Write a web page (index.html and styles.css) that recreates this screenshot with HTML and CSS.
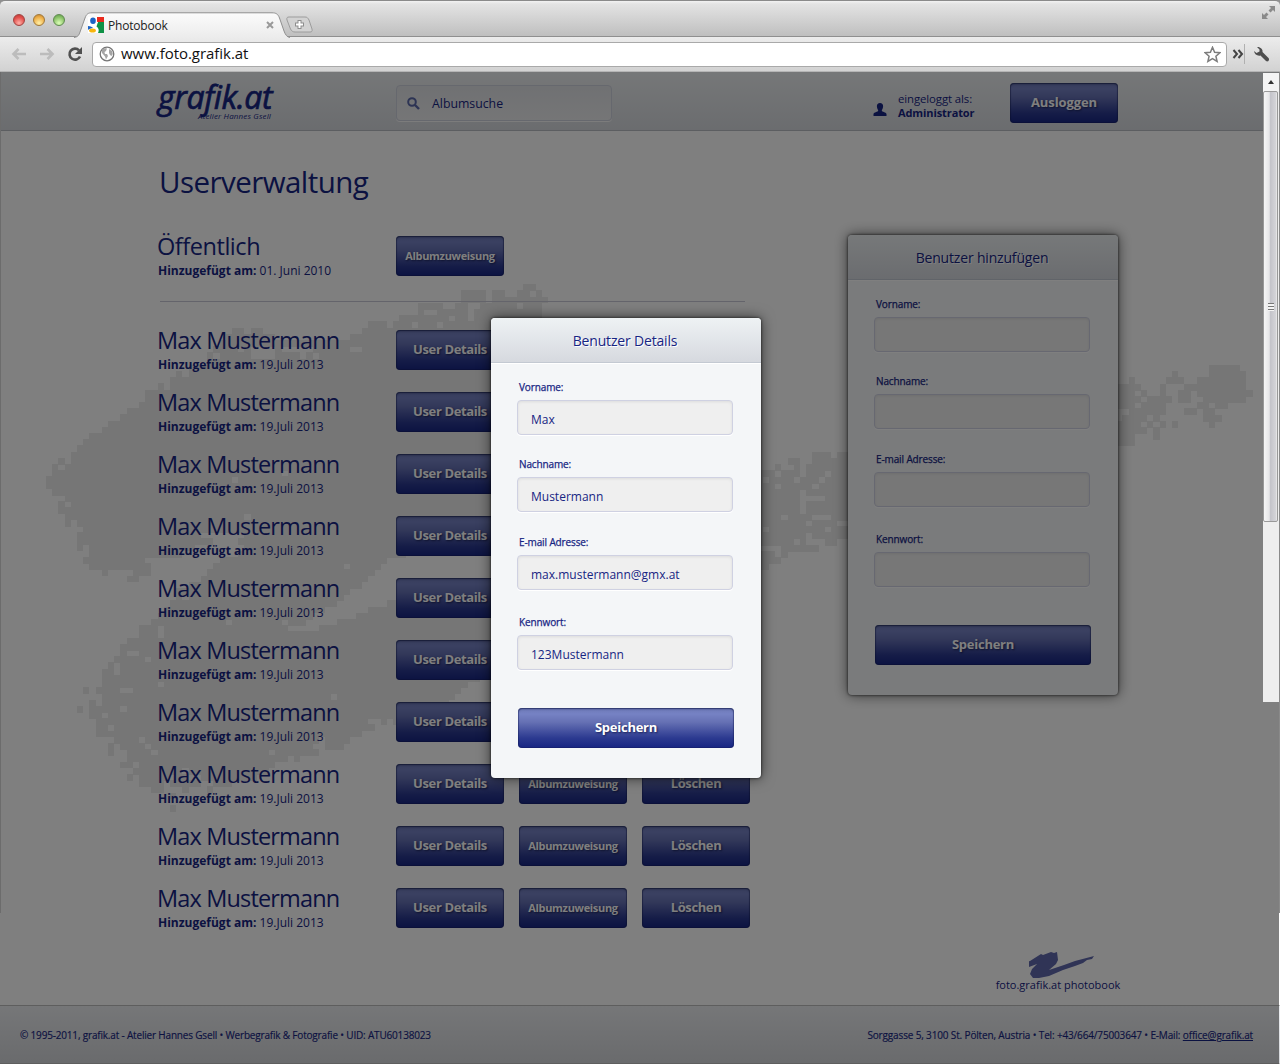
FILE: index.html
```html
<!DOCTYPE html>
<html lang="de">
<head>
<meta charset="utf-8">
<title>Photobook</title>
<link rel="stylesheet" href="styles.css">
</head>
<body>
<div class="browser">
  <div class="tabstrip">
    <div class="lights"><i class="light red"></i><i class="light yellow"></i><i class="light green"></i></div>
    <div class="tab">
      <svg class="tab-shape" width="216" height="26" viewBox="0 0 216 26"><defs><linearGradient id="tabfill" x1="0" y1="0" x2="0" y2="1"><stop offset="0" stop-color="#fbfbfb"/><stop offset="1" stop-color="#ececec"/></linearGradient></defs><path d="M0 25.5C4 25 5 23 6 20L11 6C12.500 2 14 .8 18 .8H198C202 .8 204 2 205.500 6L210 19C211.500 23 213 25 216 25.500" fill="url(#tabfill)" stroke="#8f8f8f"/></svg>
      <svg class="favicon" width="16" height="16" viewBox="0 0 16 16"><rect width="16" height="16" fill="#fff"/><path d="M9 0h7v5H9z" fill="#ea2a1d"/><path d="M10 5h6v11h-6c1.500-3 .5-5-1.500-6.500z" fill="#0f9246"/><ellipse cx="5" cy="3.700" rx="2.800" ry="3.200" fill="#1c63c4"/><path d="M0 9c3 0 4 1 5 2-2 0-4 1-5 2z" fill="#1c63c4"/><ellipse cx="4.500" cy="13.600" rx="3.400" ry="2" fill="#f7b50d"/><path d="M5 9.500c-1-1 1-1.500 2-2l3-2.500" stroke="#fff" fill="none"/></svg>
      <span class="tab-title">Photobook</span>
      <svg class="tab-close" width="8" height="8" viewBox="0 0 8 8"><path d="M1 1l6 6M7 1l-6 6" stroke="#999" stroke-width="2"/></svg>
    </div>
    <svg class="newtab" width="27" height="17" viewBox="0 0 27 17"><path d="M3 1H19C21 1 22 2 23 4L26 13C26.500 15 26 16 24 16H9C7 16 5.500 15 4.500 13L1 4C.5 2 1 1 3 1z" fill="#d2d2d2" stroke="#9c9c9c"/><path d="M13.500 4v9M9 8.500h9" stroke="#8d8d8d" stroke-width="4"/><path d="M13.500 5v7M10 8.500h7" stroke="#fff" stroke-width="2"/></svg>
    <svg class="fullscreen" width="15" height="15" viewBox="0 0 15 15" fill="#8a8a8a"><path d="M8 1h6v6l-2-2-2.500 2.500-2-2L10 3z"/><path d="M7 14H1V8l2 2 2.500-2.500 2 2L5 12z"/></svg>
  </div>
  <div class="toolbar">
    <svg class="nav" width="16" height="14" viewBox="0 0 16 14"><path d="M15 7H3M7.500 2L2.500 7l5 5" fill="none" stroke="#bcbcbc" stroke-width="2.600"/></svg>
    <svg class="nav fwd" width="16" height="14" viewBox="0 0 16 14"><path d="M1 7h12M8.500 2l5 5-5 5" fill="none" stroke="#bcbcbc" stroke-width="2.600"/></svg>
    <svg class="reload" width="16" height="16" viewBox="0 0 16 16"><path d="M13 10.500A5.500 5.500 0 1 1 12 4.300" fill="none" stroke="#505050" stroke-width="2.600"/><path d="M15 1v7H8z" fill="#505050"/></svg>
    <div class="address">
      <svg width="16" height="16" viewBox="0 0 16 16"><circle cx="8" cy="8" r="6.800" fill="#fff" stroke="#777" stroke-width="1.300"/><path d="M3 3.500C5 2 7 2 8 2.500L7 5 5.500 6 6 8H8l1 2-2 3.500-1-3L3 7zM10 3l3 2 .8 3-1.300 2-1.500-1-1-2z" fill="#a5a5a5"/></svg>
      <span class="url">www.foto.grafik.at</span>
      <svg class="star" width="17" height="17" viewBox="0 0 17 17"><path d="M8.500 1.300l2.100 4.900 5.300.5-4 3.500 1.200 5.200-4.600-2.800-4.600 2.800 1.200-5.200-4-3.500 5.300-.5z" fill="#fff" stroke="#7d7d7d" stroke-width="1.500"/></svg>
    </div>
    <svg class="more" width="12" height="10" viewBox="0 0 12 10"><path d="M1.500 1l3.500 4-3.500 4M6.500 1L10 5 6.500 9" fill="none" stroke="#444" stroke-width="2"/></svg>
    <i class="divider"></i>
    <svg class="wrench" width="17" height="17" viewBox="0 0 17 17"><path d="M4 1C7 .5 10 3 9.500 6L15.500 12C17 14 15 16.500 13 15L7.500 9.500C4.500 10.300 1.500 8.500 1 5L3.500 7 6.500 5.500 6.500 3.500z" fill="#4e4e4e"/></svg>
  </div>
</div>

<main class="page">
  <svg class="map" width="1280" height="992" viewBox="0 72 1280 992" shape-rendering="crispEdges">
    <g transform="translate(46 287.600) scale(6.2)">
      <path d="M77 0H79M67 1H71M72 1H74M76 1H78M79 1H80M67 2H71M72 2H81M60 3H64M66 3H68M70 3H76M77 3H80M60 4H61M63 4H68M69 4H80M57 5H65M66 5H68M69 5H80M52 6H55M56 6H59M60 6H63M64 6H80M30 7H32M33 7H35M51 7H80M29 8H37M49 8H80M28 9H80M27 10H31M32 10H33M37 10H38M43 10H49M51 10H80M26 11H27M28 11H33M37 11H41M42 11H43M44 11H80M26 12H80M23 13H80M21 14H22M23 14H80M20 15H80M18 16H19M20 16H80M16 17H80M16 18H80M15 19H80M13 20H80M12 21H80M10 22H80M9 23H80M7 24H80M6 25H80M5 26H80M4 27H80M2 28H3M4 28H80M1 29H2M3 29H80M1 30H38M39 30H80M0 31H30M31 31H80M0 32H80M1 33H80M3 34H80M2 35H3M4 35H80M2 36H80M3 37H32M33 37H80M3 38H4M5 38H80M6 39H80M5 40H25M32 40H80M5 41H27M31 41H80M5 42H6M7 42H24M32 42H62M7 43H22M31 43H58M6 44H16M28 44H55M7 45H17M27 45H48M49 45H54M9 46H10M14 46H17M26 46H53M13 47H15M25 47H52M23 48H51M21 49H49M21 50H22M23 50H48M57 50H80M20 51H47M55 51H80M19 52H45M52 52H80M18 53H43M50 53H80M17 54H29M30 54H38M39 54H42M47 54H80M15 55H18M19 55H39M44 55H80M15 56H18M19 56H80M13 57H78M12 58H78M12 59H13M15 59H76M11 60H16M17 60H74M10 61H11M12 61H72M9 62H11M12 62H70M9 63H70M9 64H18M19 64H68M6 65H7M8 65H12M14 65H67M9 66H46M47 66H66M7 67H8M9 67H65M5 68H6M7 68H12M13 68H64M7 69H9M10 69H60M8 70H52M54 70H55M56 70H58M8 71H10M11 71H53M8 72H51M11 73H15M16 73H44M45 73H49M10 74H11M12 74H16M17 74H43M45 74H48M10 75H11M13 75H17M18 75H36M37 75H44M13 76H39M40 76H41M12 77H14M15 77H37M14 78H22M23 78H36M13 79H14M15 79H20M21 79H23M25 79H34M15 80H19M20 80H25M27 80H30M17 81H19M22 81H23M26 81H27M20 82H21M20 84H21"/>
    </g>
    <g transform="translate(43.600 287.900) scale(6.200)">
      <path d="M124 27H127M128 27H132M120 28H122M124 28H132M118 29H119M121 29H122M123 29H132M115 30H118M119 30H122M123 30H126M127 30H132M115 31H116M117 31H121M122 31H125M126 31H132M115 32H118M119 32H124M125 32H132M115 33H122M123 33H132M115 34H122M126 34H132M115 35H122M123 35H132M115 36H122M123 36H132M115 37H119M120 37H124M127 37H132M115 38H123M124 38H128M115 39H116M117 39H126M127 39H132M115 40H123M124 40H132M115 41H121M122 41H123M126 41H128M119 42H125M115 43H118M119 43H120M115 44H119M115 45H117M188 13H193M182 14H183M188 14H194M175 15H176M181 15H184M186 15H194M173 16H177M180 16H181M184 16H194M173 17H176M177 17H178M180 17H181M183 17H185M186 17H195M173 18H177M178 18H182M183 18H185M187 18H194M173 19H176M177 19H181M186 19H188M189 19H191M175 20H181M184 20H186M187 20H189M172 21H173M174 21H178M179 21H180M187 21H190M172 22H177M178 22H179M180 22H181M182 22H183M188 22H189M172 23H178M179 23H180M172 24H176M179 24H180M172 25H176"/>
    </g>
  </svg>

  <header class="site-header">
    <div class="logo"><span class="logo-name">grafik.at</span><span class="logo-sub">Atelier Hannes Gsell</span></div>
    <div class="search">
      <svg width="13" height="13" viewBox="0 0 13 13"><circle cx="5" cy="5" r="3.800" fill="none" stroke="#5a68a8" stroke-width="2"/><path d="M8 8l4 4" stroke="#5a68a8" stroke-width="2.400"/></svg>
      <span>Albumsuche</span>
    </div>
    <svg class="user-icon" width="14" height="14" viewBox="0 0 14 14"><path d="M7 0c2 0 3.300 1.500 3.100 3.500C10 5.500 9 6.500 8.800 7.500c0 1.500 4.200 1.500 4.700 3.500v2H.5v-2c.5-2 4.700-2 4.700-3.500C5 6.500 4 5.500 3.900 3.500 3.700 1.500 5 0 7 0z" fill="#172583"/></svg>
    <div class="session"><span>eingeloggt als:</span><b>Administrator</b></div>
    <button class="btn logout">Ausloggen</button>
  </header>

  <div class="content">
    <section class="users">
      <h1>Userverwaltung</h1>
      <div class="row public"><div class="who"><h2>Öffentlich</h2><p><b>Hinzugefügt am:</b> 01. Juni 2010</p></div><button class="btn small">Albumzuweisung</button></div>
      <hr>
      <div class="list">
        <div class="row"><div class="who"><h2>Max Mustermann</h2><p><b>Hinzugefügt am:</b> 19.Juli 2013</p></div><button class="btn">User Details</button><button class="btn small">Albumzuweisung</button><button class="btn del">Löschen</button></div>
        <div class="row"><div class="who"><h2>Max Mustermann</h2><p><b>Hinzugefügt am:</b> 19.Juli 2013</p></div><button class="btn">User Details</button><button class="btn small">Albumzuweisung</button><button class="btn del">Löschen</button></div>
        <div class="row"><div class="who"><h2>Max Mustermann</h2><p><b>Hinzugefügt am:</b> 19.Juli 2013</p></div><button class="btn">User Details</button><button class="btn small">Albumzuweisung</button><button class="btn del">Löschen</button></div>
        <div class="row"><div class="who"><h2>Max Mustermann</h2><p><b>Hinzugefügt am:</b> 19.Juli 2013</p></div><button class="btn">User Details</button><button class="btn small">Albumzuweisung</button><button class="btn del">Löschen</button></div>
        <div class="row"><div class="who"><h2>Max Mustermann</h2><p><b>Hinzugefügt am:</b> 19.Juli 2013</p></div><button class="btn">User Details</button><button class="btn small">Albumzuweisung</button><button class="btn del">Löschen</button></div>
        <div class="row"><div class="who"><h2>Max Mustermann</h2><p><b>Hinzugefügt am:</b> 19.Juli 2013</p></div><button class="btn">User Details</button><button class="btn small">Albumzuweisung</button><button class="btn del">Löschen</button></div>
        <div class="row"><div class="who"><h2>Max Mustermann</h2><p><b>Hinzugefügt am:</b> 19.Juli 2013</p></div><button class="btn">User Details</button><button class="btn small">Albumzuweisung</button><button class="btn del">Löschen</button></div>
        <div class="row"><div class="who"><h2>Max Mustermann</h2><p><b>Hinzugefügt am:</b> 19.Juli 2013</p></div><button class="btn">User Details</button><button class="btn small">Albumzuweisung</button><button class="btn del">Löschen</button></div>
        <div class="row"><div class="who"><h2>Max Mustermann</h2><p><b>Hinzugefügt am:</b> 19.Juli 2013</p></div><button class="btn">User Details</button><button class="btn small">Albumzuweisung</button><button class="btn del">Löschen</button></div>
        <div class="row"><div class="who"><h2>Max Mustermann</h2><p><b>Hinzugefügt am:</b> 19.Juli 2013</p></div><button class="btn">User Details</button><button class="btn small">Albumzuweisung</button><button class="btn del">Löschen</button></div>
      </div>
    </section>
    <aside class="side">
      <form class="panel">
        <h3>Benutzer hinzufügen</h3>
        <div class="fields">
          <div class="field"><label>Vorname:</label><div class="input"></div></div>
          <div class="field"><label>Nachname:</label><div class="input"></div></div>
          <div class="field"><label>E-mail Adresse:</label><div class="input"></div></div>
          <div class="field"><label>Kennwort:</label><div class="input"></div></div>
          <button type="button" class="btn save">Speichern</button>
        </div>
      </form>
      <div class="badge">
        <svg width="66" height="30" viewBox="0 0 66 30"><path d="M1 10L12 3l2 1 8-3 3 1 3-1 1 8-2 4-7 6 15-5 11-4 19-5-2 3-5 1-4 3-8 3-12 4-14 6-10 2-6 0-3-4 2-5 5-5-8 3-5-5z" fill="#6069ad"/></svg>
        <span>foto.grafik.at photobook</span>
      </div>
    </aside>
  </div>

  <footer class="site-footer">
    <span class="foot-left">© 1995-2011, grafik.at - Atelier Hannes Gsell • Werbegrafik &amp; Fotografie • UID: ATU60138023</span>
    <span class="foot-right">Sorggasse 5, 3100 St. Pölten, Austria • Tel: +43/664/75003647 • E-Mail: <u>office@grafik.at</u></span>
  </footer>
  <div class="overlay"></div>
</main>

<div class="edge left"></div>
<div class="edge right"></div>
<div class="scrollbar">
  <div class="arrow"></div>
  <div class="thumb"><i></i></div>
</div>

<form class="panel modal">
  <h3>Benutzer Details</h3>
  <div class="fields">
    <div class="field"><label>Vorname:</label><div class="input">Max</div></div>
    <div class="field"><label>Nachname:</label><div class="input">Mustermann</div></div>
    <div class="field"><label>E-mail Adresse:</label><div class="input">max.mustermann@gmx.at</div></div>
    <div class="field"><label>Kennwort:</label><div class="input">123Mustermann</div></div>
    <button type="button" class="btn save">Speichern</button>
  </div>
</form>
</body>
</html>
```
FILE: styles.css
```css
* { box-sizing: border-box; margin: 0; padding: 0; }
body {
  position: relative;
  width: 1280px;
  height: 1064px;
  overflow: hidden;
  background: #fff;
  color: #172583;
  font-family: "Open Sans", "Noto Sans", sans-serif;
}
svg { display: block; flex: none; }
button { border: 0; font-family: inherit; }

/* browser window */
.browser { height: 72px; background: #8f8f8f; }
.tabstrip {
  display: flex;
  height: 37px;
  padding-left: 13px;
  border-top: 1px solid #8a8a8a;
  border-bottom: 1px solid #8f8f8f;
  border-radius: 5px 5px 0 0;
  background: linear-gradient(#f2f2f2 0, #e3e3e3 3px, #bfbfbf);
}
.lights { display: flex; gap: 8px; padding-top: 13px; width: 61px; }
.light { width: 12px; height: 12px; border-radius: 50%; border: 1px solid #777; }
.red { background: radial-gradient(circle at 50% 80%, #ffb0a8, #e2504c 60%, #b93a36); border-color: #a04340; }
.yellow { background: radial-gradient(circle at 50% 80%, #fff0a8, #eeb04a 60%, #c08030); border-color: #a07838; }
.green { background: radial-gradient(circle at 50% 80%, #dcffb8, #8cc36a 60%, #5c9a48); border-color: #5f8a50; }
.tab { position: relative; display: flex; align-items: center; width: 216px; height: 26px; margin-top: 11px; padding-left: 14px; }
.tab-shape { position: absolute; left: 0; top: 0; }
.favicon { position: relative; }
.tab-title { position: relative; width: 161px; padding-left: 4px; font-size: 12px; letter-spacing: -.2px; color: #222; }
.tab-close { position: relative; margin-left: 1px; }
.newtab { margin: 15px 0 0 -4px; }
.fullscreen { margin: 4px 4px 0 auto; }
.toolbar {
  display: flex;
  align-items: center;
  height: 35px;
  padding-left: 11px;
  border-bottom: 1px solid #b5b5b5;
  background: linear-gradient(#ececec, #d2d2d2);
}
.fwd { margin-left: 12px; }
.reload { margin-left: 12px; }
.address {
  display: flex;
  align-items: center;
  width: 1135px;
  height: 25px;
  margin-left: 9px;
  padding: 0 5px 0 6px;
  border: 1px solid #a9a9a9;
  border-radius: 4px;
  background: #fff;
}
.url { padding: 0 0 2px 6px; font-size: 15px; letter-spacing: -.04px; color: #111; }
.star { margin-left: auto; }
.more { margin-left: 5px; }
.divider { width: 1px; height: 20px; background: #b0b0b0; }
.wrench { margin-left: 8px; }

/* page */
.page { position: relative; display: flex; flex-direction: column; height: 992px; background: #fff; }
.map { position: absolute; left: 0; top: 0; }
.map path { stroke: #ececec; stroke-width: 1.12; fill: none; }
.overlay { position: absolute; inset: 0 1px 0 0; background: rgba(0, 0, 0, .5); }

.site-header {
  position: relative;
  display: flex;
  height: 59px;
  padding-left: 157px;
  border-bottom: 1px solid #b9bcc2;
  background: linear-gradient(#eceff1, #d6d9de);
}
.logo { display: flex; flex-direction: column; width: 239px; }
.logo-name { height: 38px; padding-left: 1px; line-height: 50px; font-size: 32px; font-style: italic; letter-spacing: -.4px; -webkit-text-stroke: .7px #172583; }
.logo-sub { padding-left: 41px; line-height: 12px; font-size: 8px; font-style: italic; letter-spacing: .15px; }
.search {
  display: flex;
  align-items: center;
  gap: 12px;
  width: 216px;
  height: 36px;
  margin-top: 13px;
  padding: 1px 0 0 10px;
  border: 1px solid #cdd0dc;
  border-radius: 4px;
  background: linear-gradient(#e0e2e6, #ebecee);
  box-shadow: 0 1px 0 #f8f8f8;
  font-size: 12.3px;
}
.user-icon { margin: 31px 0 0 261px; }
.session { display: flex; flex-direction: column; width: 112px; margin-left: 11px; padding-top: 20px; font-size: 11.4px; line-height: 14px; letter-spacing: -.1px; }
.session b { font-size: 11px; }
.logout { margin-top: 11px; }

.btn {
  width: 108px;
  height: 40px;
  padding-bottom: 3px;
  border-radius: 4px;
  background: linear-gradient(#6d78b6 0, #7682c4 15%, #6671b4 35%, #2c3a90 75%, #172583);
  box-shadow: inset 0 0 0 1px rgba(20, 30, 90, .35), inset 0 1px 2px rgba(20, 30, 70, .6);
  color: #fff;
  font-size: 13px;
  font-weight: 700;
  letter-spacing: -.38px;
  text-shadow: 1px 1px 2px rgba(10, 15, 60, .7);
}
.btn.small { padding-bottom: 1px; font-size: 11px; letter-spacing: -.32px; }
.btn.logout { letter-spacing: -.1px; }

.content { position: relative; display: flex; justify-content: space-between; width: 1122px; padding-left: 157px; }
.users { width: 593px; padding-top: 33px; }
h1 { padding-left: 2px; font-size: 29.5px; line-height: 36px; font-weight: 400; letter-spacing: -.55px; }
.row { display: grid; grid-template-columns: 224px repeat(3, 108px); column-gap: 15px; height: 40px; }
.public { margin-top: 36px; }
h2 { padding-top: 1px; font-size: 23.5px; line-height: 18px; font-weight: 400; letter-spacing: -.85px; }
.public h2 { letter-spacing: -.45px; }
.who p { margin-top: 8px; padding-left: 1px; font-size: 12px; line-height: 16px; white-space: nowrap; }
hr { width: 585px; margin: 25px 0 28px 3px; border: 0; border-top: 1px solid #c9c9d6; }
.list { display: flex; flex-direction: column; gap: 22px; }

.side { display: flex; flex-direction: column; width: 274px; padding-top: 104px; }
.panel {
  width: 270px;
  height: 460px;
  border-radius: 4px;
  background: #f4f6f8;
  box-shadow: 0 0 3px rgba(0, 0, 0, .8), 0 0 14px rgba(0, 0, 0, .6);
}
h3 {
  height: 45px;
  padding-right: 2px;
  border-bottom: 1px solid #c3c9d2;
  border-radius: 4px 4px 0 0;
  background: linear-gradient(#eef2f4, #d6d9df);
  box-shadow: 0 1px 0 #fff;
  font-size: 14px;
  line-height: 46px;
  font-weight: 400;
  letter-spacing: -.18px;
  text-align: center;
  text-shadow: 1px 1px 0 #fff;
}
.fields { display: flex; flex-direction: column; padding: 17px 26px 0; }
.field + .field { margin-top: 22px; }
.field:nth-child(3) { margin-top: 23px; }
.field:nth-child(4) { margin-top: 25px; }
label { display: block; height: 20px; padding-left: 2px; font-size: 10px; line-height: 15px; letter-spacing: -.12px; -webkit-text-stroke: .25px #172583; }
.input {
  width: 216px;
  height: 35px;
  padding: 0 13px;
  border: 1px solid #cfd1e2;
  border-radius: 4px;
  background: #efefef;
  box-shadow: inset 0 1px 3px rgba(0, 0, 0, .08), 0 1px 0 #fff;
  font-size: 12px;
  line-height: 37px;
}
.save { width: 216px; margin: 38px 0 0 1px; letter-spacing: -.25px; }
.badge { display: flex; flex-direction: column; align-items: center; width: 124px; margin: 256px 0 0 148px; font-size: 11px; line-height: 14px; white-space: nowrap; }
.badge svg { margin: 0 0 -3px 7px; }

.site-footer {
  position: relative;
  display: flex;
  justify-content: space-between;
  height: 59px;
  margin-top: auto;
  padding: 0 27px 0 20px;
  border-top: 1px solid #bcbcbc;
  border-bottom: 1px solid #bcbcbc;
  background: linear-gradient(#eceef1, #d4d6da);
  font-size: 10px;
  line-height: 59px;
  white-space: nowrap;
  -webkit-text-stroke: .15px #172583;
}
.foot-left { letter-spacing: -.18px; }
.foot-right { letter-spacing: -.15px; }

/* window chrome above the page */
.edge { position: absolute; top: 72px; width: 1px; height: 841px; background: #6c6c6c; }
.edge.left { left: 0; }
.edge.right { right: 0; background: #8a8a8a; }
.scrollbar { position: absolute; left: 1263px; top: 73px; width: 16px; height: 629px; background: #eee; }
.arrow { height: 18px; background: #f4f4f4; }
.arrow::before { content: ""; display: block; width: 0; margin: 0 auto; padding-top: 7px; }
.arrow::after { content: ""; display: block; width: 0; margin: 0 auto; border: 3.500px solid transparent; border-top: 0; border-bottom: 4px solid #333; }
.thumb {
  display: flex;
  align-items: center;
  justify-content: center;
  width: 15px;
  height: 431px;
  border: 1px solid #999;
  border-radius: 2px;
  background: linear-gradient(90deg, #f6f6f6 0, #e6e6e8 40%, #c4c4ca 50%, #d4d4d8 90%, #eee);
}
.thumb i { width: 6px; height: 8px; background: repeating-linear-gradient(#777 0 1px, #f4f4f4 1px 3px); }
.modal { position: absolute; left: 491px; top: 318px; }
```
